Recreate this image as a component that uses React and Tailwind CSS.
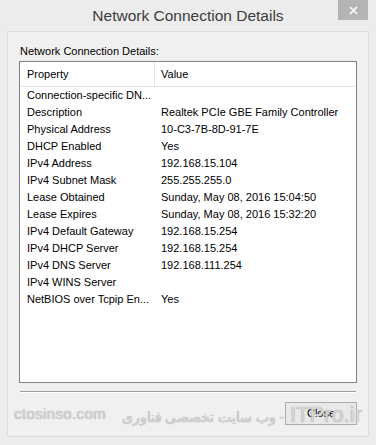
import React from 'react';

const rows = [
  ['Connection-specific DN...', ''],
  ['Description', 'Realtek PCIe GBE Family Controller'],
  ['Physical Address', '10-C3-7B-8D-91-7E'],
  ['DHCP Enabled', 'Yes'],
  ['IPv4 Address', '192.168.15.104'],
  ['IPv4 Subnet Mask', '255.255.255.0'],
  ['Lease Obtained', 'Sunday, May 08, 2016 15:04:50'],
  ['Lease Expires', 'Sunday, May 08, 2016 15:32:20'],
  ['IPv4 Default Gateway', '192.168.15.254'],
  ['IPv4 DHCP Server', '192.168.15.254'],
  ['IPv4 DNS Server', '192.168.111.254'],
  ['IPv4 WINS Server', ''],
  ['NetBIOS over Tcpip En...', 'Yes'],
];

const App = () => {
  return (
    <div className="relative w-[376px] h-[445px] bg-[#ececec] font-['Liberation_Sans',sans-serif] text-[11px] text-black overflow-hidden">
      {/* Title bar */}
      <div className="relative h-[31px] flex items-center justify-center">
        <span className="text-[15.5px] text-[#3c3c3c] pt-[1px]">Network Connection Details</span>
        <div className="absolute right-[8px] top-0 w-[30px] h-[20px] bg-[#b4b4b4] flex items-center justify-center">
          <svg width="9" height="9" viewBox="0 0 9 9">
            <path d="M1 1 L8 8 M8 1 L1 8" stroke="#fff" strokeWidth="1.6" />
          </svg>
        </div>
      </div>

      {/* Client area */}
      <div className="mx-[7px] h-[406px] bg-[#f0f0f0] border border-[#dcdcdc] px-[11px] pt-[10px]">
        <div className="h-[18px] leading-[18px] pl-[1px]">Network Connection Details:</div>

        {/* List view */}
        <div className="mt-[1px] h-[322px] bg-white border border-[#838383]">
          <div className="flex h-[25px] items-center border-b border-[#e5e5e5]">
            <div className="w-[135px] pl-[7px] h-full flex items-center border-r border-[#e5e5e5]">Property</div>
            <div className="pl-[6px]">Value</div>
          </div>
          <div>
            {rows.map(([k, v], i) => (
              <div key={i} className="flex h-[17px] items-center">
                <div className="w-[136px] pl-[7px] whitespace-nowrap">{k}</div>
                <div className="pl-[5px] whitespace-nowrap">{v}</div>
              </div>
            ))}
          </div>
        </div>

        {/* Separator */}
        <div className="mt-[8px] mx-[1px] border-t border-[#a0a0a0] border-b border-b-white" />

        <div className="mt-[9px] flex justify-end">
          <button className="w-[72px] h-[23px] border border-[#acacac] bg-[#e8e8e8] text-black leading-none">Close</button>
        </div>
      </div>

      {/* Watermark */}
      <div className="absolute left-[14px] top-[403px] text-[15px] tracking-wide text-[#d6d6d6] pointer-events-none [text-shadow:0_0_1px_#8a8a8a]">ctosinso.com</div>
      <div dir="rtl" className="absolute right-[14px] top-[398px] flex items-baseline gap-[6px] text-[#d6d6d6] whitespace-nowrap pointer-events-none [text-shadow:0_0_1px_#8a8a8a]">
        <span className="text-[22px]">ITPro.ir</span>
        <span className="text-[14px] font-['Noto_Sans',sans-serif]">- وب سایت تخصصی فناوری</span>
      </div>
    </div>
  );
};

export default App;
